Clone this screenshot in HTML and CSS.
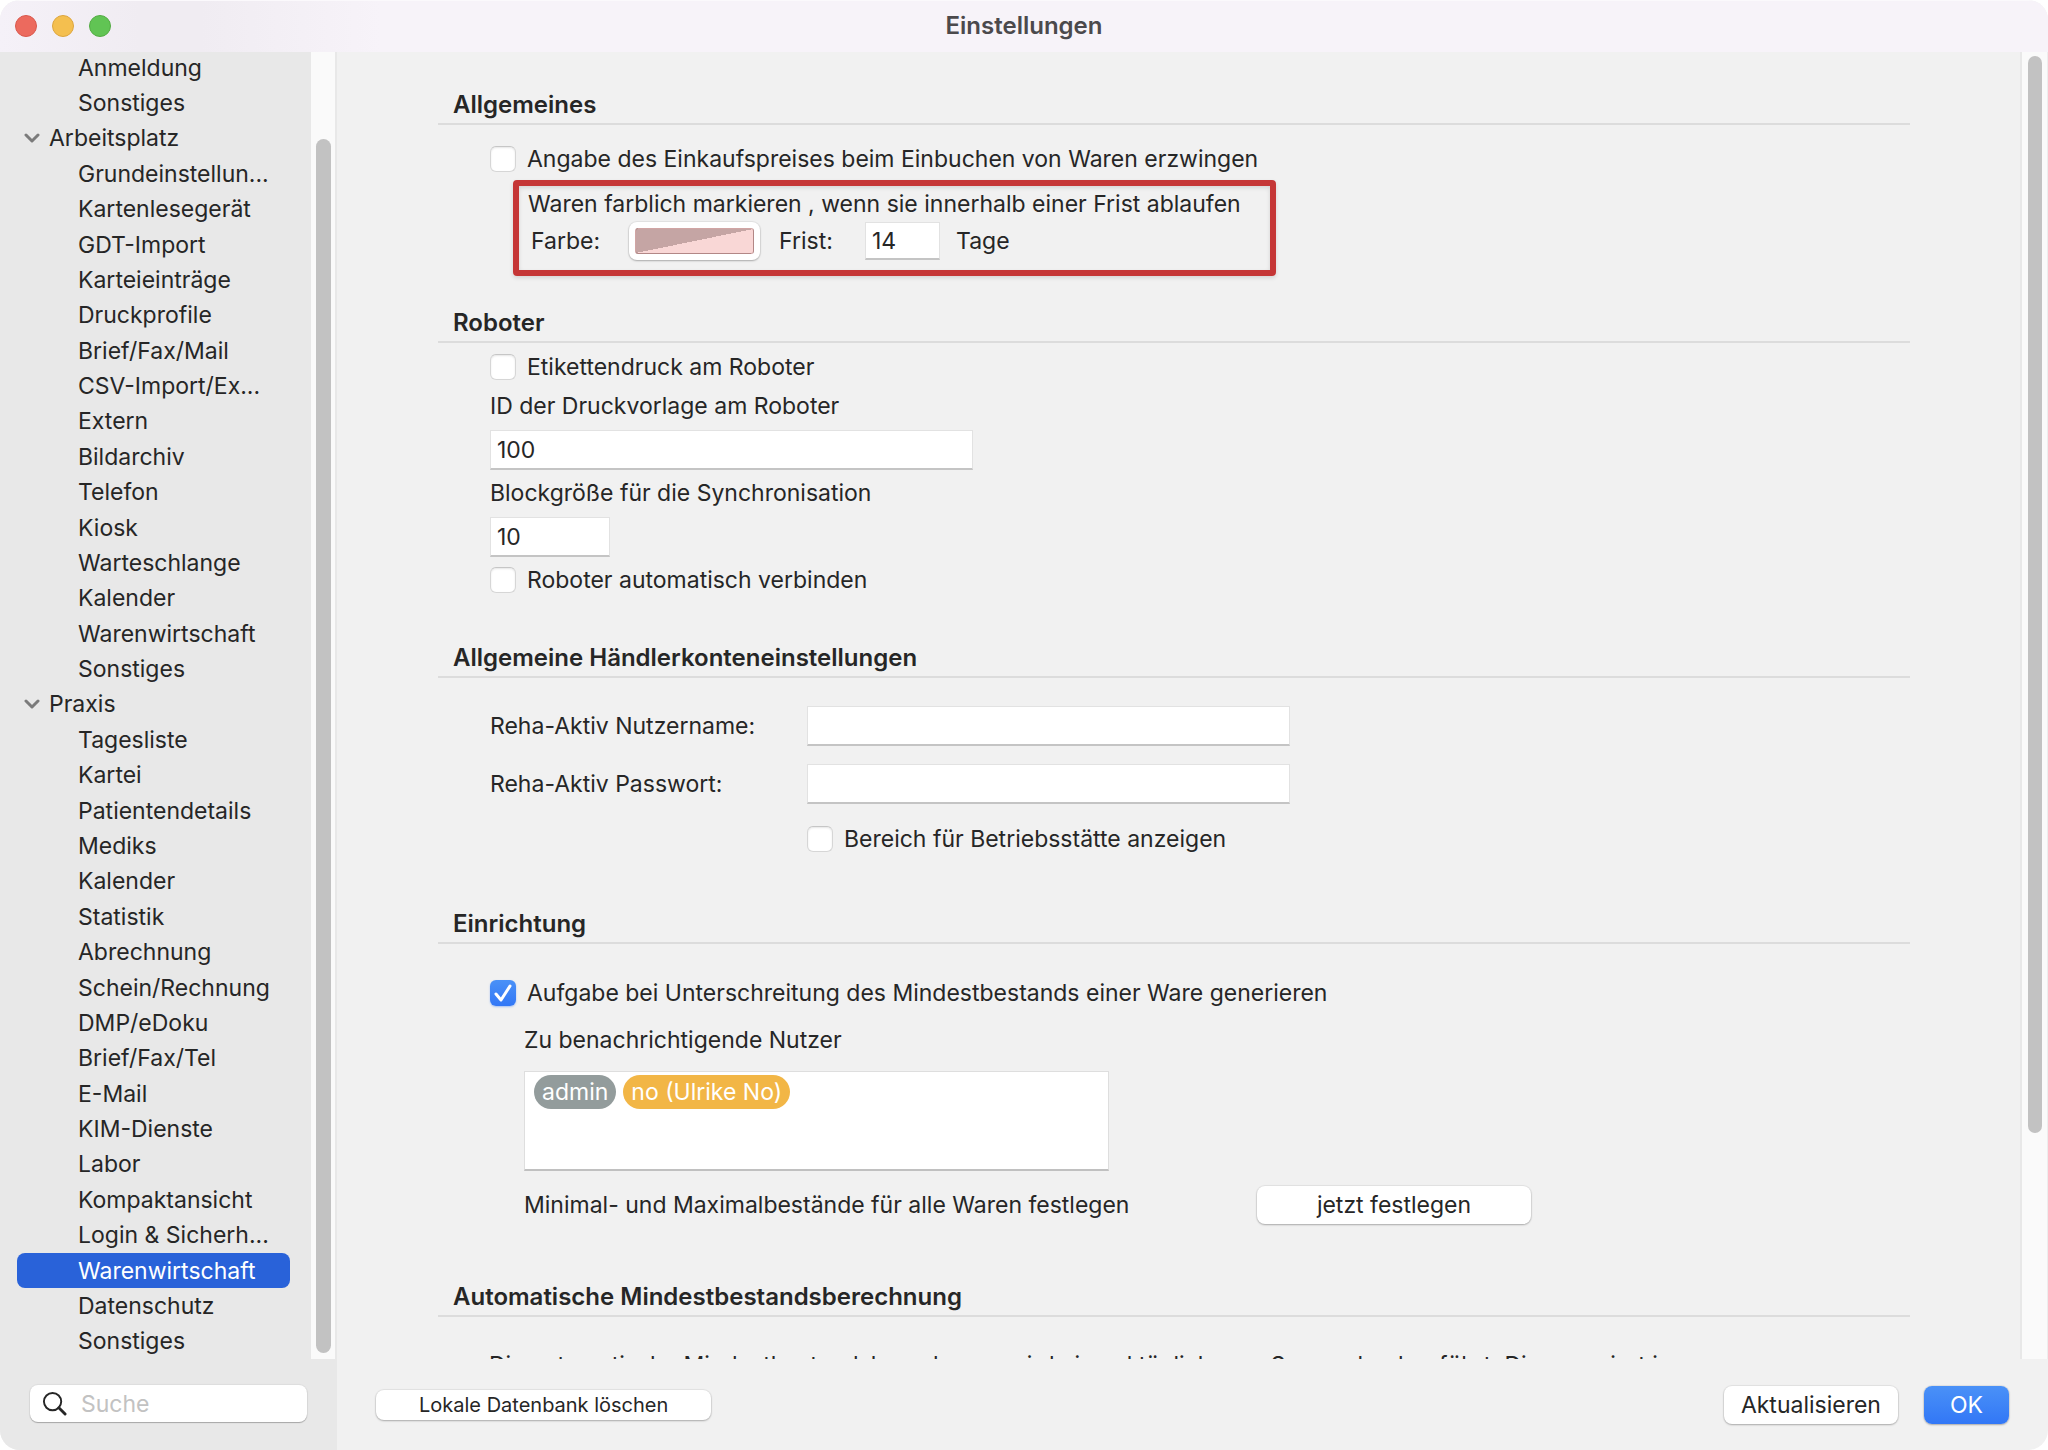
FILE: index.html
```html
<!DOCTYPE html>
<html lang="de">
<head>
<meta charset="utf-8">
<title>Einstellungen</title>
<link rel="stylesheet" href="styles.css">
</head>
<body>
<div class="window">
  <header class="titlebar">
    <div class="lights">
      <button class="light light-close" aria-label="Schließen"></button>
      <button class="light light-min" aria-label="Minimieren"></button>
      <button class="light light-zoom" aria-label="Zoomen"></button>
    </div>
    <h1 class="title">Einstellungen</h1>
  </header>
  <div class="main">
    <aside class="sidebar">
      <div class="sidebar-scroll">
        <nav class="tree">
          <a class="item" href="#">Anmeldung</a>
          <a class="item" href="#">Sonstiges</a>
          <a class="group" href="#"><svg class="chevron" viewBox="0 0 16 10"><path d="M2 2l6 6 6-6"/></svg>Arbeitsplatz</a>
          <a class="item" href="#">Grundeinstellun...</a>
          <a class="item" href="#">Kartenlesegerät</a>
          <a class="item" href="#">GDT-Import</a>
          <a class="item" href="#">Karteieinträge</a>
          <a class="item" href="#">Druckprofile</a>
          <a class="item" href="#">Brief/Fax/Mail</a>
          <a class="item" href="#">CSV-Import/Ex...</a>
          <a class="item" href="#">Extern</a>
          <a class="item" href="#">Bildarchiv</a>
          <a class="item" href="#">Telefon</a>
          <a class="item" href="#">Kiosk</a>
          <a class="item" href="#">Warteschlange</a>
          <a class="item" href="#">Kalender</a>
          <a class="item" href="#">Warenwirtschaft</a>
          <a class="item" href="#">Sonstiges</a>
          <a class="group" href="#"><svg class="chevron" viewBox="0 0 16 10"><path d="M2 2l6 6 6-6"/></svg>Praxis</a>
          <a class="item" href="#">Tagesliste</a>
          <a class="item" href="#">Kartei</a>
          <a class="item" href="#">Patientendetails</a>
          <a class="item" href="#">Mediks</a>
          <a class="item" href="#">Kalender</a>
          <a class="item" href="#">Statistik</a>
          <a class="item" href="#">Abrechnung</a>
          <a class="item" href="#">Schein/Rechnung</a>
          <a class="item" href="#">DMP/eDoku</a>
          <a class="item" href="#">Brief/Fax/Tel</a>
          <a class="item" href="#">E-Mail</a>
          <a class="item" href="#">KIM-Dienste</a>
          <a class="item" href="#">Labor</a>
          <a class="item" href="#">Kompaktansicht</a>
          <a class="item" href="#">Login &amp; Sicherh...</a>
          <a class="item selected" href="#" aria-current="page">Warenwirtschaft</a>
          <a class="item" href="#">Datenschutz</a>
          <a class="item" href="#">Sonstiges</a>
        </nav>
        <div class="track track-side"><div class="thumb"></div></div>
      </div>
      <div class="sidebar-foot">
        <label class="search">
          <svg class="search-icon" viewBox="0 0 26 26"><circle cx="11" cy="11" r="9"/><path d="M17.500 17.500L24 24"/></svg>
          <input class="search-input" type="search" placeholder="Suche" aria-label="Suche">
        </label>
      </div>
    </aside>
    <div class="content">
      <div class="content-scroll">
        <main class="panel">
          <section class="section general">
            <h2>Allgemeines</h2>
            <label class="check"><input type="checkbox">Angabe des Einkaufspreises beim Einbuchen von Waren erzwingen</label>
            <div class="highlight">
              <p class="text">Waren farblich markieren , wenn sie innerhalb einer Frist ablaufen</p>
              <div class="expiry">
                <label for="farbe">Farbe:</label>
                <input id="farbe" class="color" type="color" value="#f9d7d6">
                <label for="frist">Frist:</label>
                <input id="frist" class="field field-days" type="text" value="14">
                <span>Tage</span>
              </div>
            </div>
          </section>
          <section class="section robot">
            <h2>Roboter</h2>
            <div class="stack">
              <label class="check"><input type="checkbox">Etikettendruck am Roboter</label>
              <div class="labelled">
                <label for="vorlage">ID der Druckvorlage am Roboter</label>
                <input id="vorlage" class="field field-wide" type="text" value="100">
              </div>
              <div class="labelled">
                <label for="block">Blockgröße für die Synchronisation</label>
                <input id="block" class="field field-short" type="text" value="10">
              </div>
              <label class="check"><input type="checkbox">Roboter automatisch verbinden</label>
            </div>
          </section>
          <section class="section dealer">
            <h2>Allgemeine Händlerkonteneinstellungen</h2>
            <div class="form">
              <label for="nutzer">Reha-Aktiv Nutzername:</label>
              <input id="nutzer" class="field" type="text">
              <label for="passwort">Reha-Aktiv Passwort:</label>
              <input id="passwort" class="field" type="password">
              <label class="check form-check"><input type="checkbox">Bereich für Betriebsstätte anzeigen</label>
            </div>
          </section>
          <section class="section setup">
            <h2>Einrichtung</h2>
            <label class="check"><input type="checkbox" checked>Aufgabe bei Unterschreitung des Mindestbestands einer Ware generieren</label>
            <div class="nested">
              <p class="text">Zu benachrichtigende Nutzer</p>
              <div class="tokens">
                <span class="token token-gray">admin</span>
                <span class="token token-orange">no (Ulrike No)</span>
              </div>
              <div class="limits">
                <span>Minimal- und Maximalbestände für alle Waren festlegen</span>
                <button class="button">jetzt festlegen</button>
              </div>
            </div>
          </section>
          <section class="section auto">
            <h2>Automatische Mindestbestandsberechnung</h2>
            <p class="text note">Die automatische Mindestbestandsberechnung wird einmal täglich vom Server durchgeführt. Dies passiert in</p>
          </section>
        </main>
        <div class="track track-main"><div class="thumb"></div></div>
      </div>
      <footer class="footer">
        <button class="button button-small">Lokale Datenbank löschen</button>
        <div class="actions">
          <button class="button">Aktualisieren</button>
          <button class="button button-primary">OK</button>
        </div>
      </footer>
    </div>
  </div>
</div>
</body>
</html>
```

FILE: styles.css
```css
* {
  box-sizing: border-box;
}

body {
  margin: 0;
  background: #fff;
  color: #262626;
  font: 23px/32px Inter, "Liberation Sans", sans-serif;
  font-optical-sizing: none;
}

h1, h2, p {
  margin: 0;
}

input, button {
  font: inherit;
  font-optical-sizing: none;
  color: inherit;
}

.window {
  display: flex;
  flex-direction: column;
  height: 100vh;
  overflow: hidden;
  border-radius: 20px;
  background: #f1f1f1;
}

/* Title bar */
.titlebar {
  display: grid;
  grid-template-columns: 1fr auto 1fr;
  align-items: center;
  flex: none;
  height: 52px;
  padding: 0 15px 2px;
  border-top: 1px solid #fbf9fc;
  background: linear-gradient(90deg, #f5f1f8 0, #f0ecf2 140px, #f0ecf2 200px, #f7f3f9 380px);
}

.lights {
  display: flex;
  gap: 15px;
}

.light {
  width: 22px;
  height: 22px;
  padding: 0;
  border: 1px solid #d9584d;
  border-radius: 50%;
  background: #ec6a5e;
}

.light-min {
  border-color: #dca53e;
  background: #f4bf4f;
}

.light-zoom {
  border-color: #53ab43;
  background: #61c454;
}

.title {
  color: #4b494c;
  font-size: 24px;
  font-weight: 600;
}

.main {
  display: flex;
  flex: 1;
  min-height: 0;
}

/* Sidebar */
.sidebar {
  display: flex;
  flex-direction: column;
  flex: none;
  width: 337px;
  background: #e8e8e8;
}

.sidebar-scroll {
  display: flex;
  flex: 1;
  min-height: 0;
  padding-right: 2px;
}

.tree {
  display: grid;
  grid-auto-rows: 1fr;
  flex: 1;
  min-width: 0;
  margin-top: -2px;
  padding: 0 21px 0 17px;
}

.tree a {
  display: flex;
  align-items: center;
  min-height: 0;
  border-radius: 8px;
  color: inherit;
  line-height: 30px;
  text-decoration: none;
  white-space: nowrap;
}

.tree .item {
  padding-left: 61px;
}

.tree .group {
  gap: 9px;
  padding-left: 7px;
}

.tree .selected {
  background: #2962d9;
  color: #fff;
}

.chevron {
  width: 16px;
  height: 10px;
  fill: none;
  stroke: #7b7b7b;
  stroke-width: 3;
  stroke-linecap: round;
  stroke-linejoin: round;
}

.track {
  flex: none;
  background: #fafafa;
}

.track-side {
  width: 24px;
  padding: 87px 4px 6px 5px;
}

.thumb {
  height: 100%;
  border-radius: 8px;
  background: #c2c2c2;
}

.sidebar-foot {
  flex: none;
  height: 91px;
  padding: 26px 30px;
}

.search {
  display: flex;
  align-items: center;
  gap: 14px;
  height: 37px;
  padding: 0 12px;
  border-radius: 8px;
  background: #fff;
  box-shadow: 0 0 1px 1px rgba(0, 0, 0, .05), 0 1px 1px rgba(0, 0, 0, .25);
}

.search-icon {
  flex: none;
  width: 25px;
  height: 25px;
  fill: none;
  stroke: #262626;
  stroke-width: 2;
  stroke-linecap: round;
}

.search-icon path {
  stroke-width: 3;
}

.search-input {
  flex: 1;
  min-width: 0;
  padding: 0;
  border: 0;
  background: none;
  outline: 0;
}

.search-input::placeholder {
  color: #c2c2c2;
}

/* Settings panel */
.content {
  display: flex;
  flex-direction: column;
  flex: 1;
  min-width: 0;
}

.content-scroll {
  display: flex;
  flex: 1;
  min-height: 0;
}

.panel {
  flex: 1;
  min-width: 0;
  overflow: hidden;
  padding: 36px 110px 0 101px;
}

.track-main {
  width: 28px;
  padding: 4px 5px 226px 6px;
  border-left: 2px solid #e8e8e8;
  border-right: 1px solid #ededed;
}

.section > h2 {
  padding: 1px 0 2px 15px;
  border-bottom: 2px solid #dcdcdc;
  font-size: 24px;
  font-weight: 600;
  line-height: 32px;
}

.check {
  display: flex;
  align-items: center;
  gap: 11px;
  height: 32px;
}

.check input {
  appearance: none;
  flex: none;
  width: 26px;
  height: 26px;
  margin: 0;
  border: 1px solid #d6d6d6;
  border-top-color: #c6c6c6;
  border-radius: 6px;
  background: #fff;
  box-shadow: inset 0 1px 2px rgba(0, 0, 0, .1);
}

.check input:checked {
  border: 0;
  background: url("data:image/svg+xml,%3Csvg xmlns='http://www.w3.org/2000/svg' viewBox='0 0 26 26'%3E%3Cpath d='M6 14l5 6 9-14' fill='none' stroke='white' stroke-width='3' stroke-linecap='round' stroke-linejoin='round'/%3E%3C/svg%3E"), linear-gradient(#4a91f7, #3277f6);
  box-shadow: 0 1px 2px rgba(50, 119, 246, .4);
}

.field {
  height: 40px;
  padding: 0 6px;
  border: 1px solid #e2e2e2;
  border-bottom: 2px solid #c4c4c4;
  border-radius: 0;
  background: #fff;
  outline: 0;
}

.general {
  margin-bottom: 30px;
}

.general > .check {
  margin: 18px 0 5px 52px;
}

.highlight {
  display: grid;
  gap: 2px;
  width: 763px;
  margin-left: 75px;
  padding: 2px 9px 10px;
  border: 6px solid #c53636;
  border-radius: 4px;
  box-shadow: 0 2px 4px rgba(0, 0, 0, .12), inset 0 2px 4px rgba(0, 0, 0, .12);
}

.text {
  white-space: nowrap;
}

.expiry {
  display: grid;
  grid-template-columns: 98px 150px 86px 91px auto;
  align-items: center;
  height: 38px;
  padding-left: 3px;
}

.color {
  width: 131px;
  height: 38px;
  padding: 0;
  border: 0;
  border-radius: 8px;
  background: #fff;
  box-shadow: 0 0 1px 1px rgba(0, 0, 0, .06), 0 1px 2px rgba(0, 0, 0, .25);
}

.color::-webkit-color-swatch-wrapper {
  padding: 6px;
}

.color::-webkit-color-swatch {
  border: 1px solid rgba(150, 90, 90, .4);
  border-radius: 3px;
  background-image: linear-gradient(to bottom right, #c5a5a4 50%, transparent 50%);
}

.field-days {
  width: 75px;
  height: 38px;
}

.robot {
  margin-bottom: 45px;
}

.stack {
  display: grid;
  gap: 7px;
  padding: 8px 0 0 52px;
}

.labelled {
  display: grid;
  gap: 8px;
}

.field-wide {
  width: 483px;
}

.field-short {
  width: 120px;
}

.dealer {
  margin-bottom: 52px;
}

.form {
  display: grid;
  grid-template-columns: 317px 483px;
  align-items: center;
  gap: 18px 0;
  padding: 28px 0 0 52px;
}

.form-check {
  grid-column: 2;
  padding-top: 1px;
  height: 33px;
}

.setup {
  margin-bottom: 56px;
}

.setup > .check {
  margin: 33px 0 15px 52px;
}

.nested {
  display: grid;
  gap: 15px;
  padding-left: 86px;
}

.tokens {
  display: flex;
  align-items: flex-start;
  gap: 7px;
  width: 585px;
  height: 100px;
  padding: 3px 9px;
  border: 1px solid #dedede;
  border-bottom: 2px solid #c0c0c0;
  background: #fff;
}

.token {
  padding: 0 8px;
  border-radius: 17px;
  color: #fff;
  line-height: 34px;
}

.token-gray {
  background: #939c9c;
}

.token-orange {
  background: #f2b646;
}

.limits {
  display: grid;
  grid-template-columns: 733px 274px;
  align-items: center;
}

.button {
  height: 38px;
  padding: 0 17px;
  border: 0;
  border-radius: 8px;
  background: #fff;
  box-shadow: 0 0 1px 1px rgba(0, 0, 0, .06), 0 1px 2px rgba(0, 0, 0, .25);
}

.button-primary {
  padding: 0 26px;
  background: linear-gradient(#4a91f7, #3277f6);
  color: #fff;
}

.button-small {
  height: 30px;
  padding: 0 43px;
  font-size: 20px;
  line-height: 30px;
}

.note {
  padding: 32px 0 0 51px;
}

.footer {
  display: flex;
  align-items: center;
  justify-content: space-between;
  flex: none;
  height: 91px;
  padding: 0 39px;
}

.actions {
  display: flex;
  gap: 26px;
}
```
